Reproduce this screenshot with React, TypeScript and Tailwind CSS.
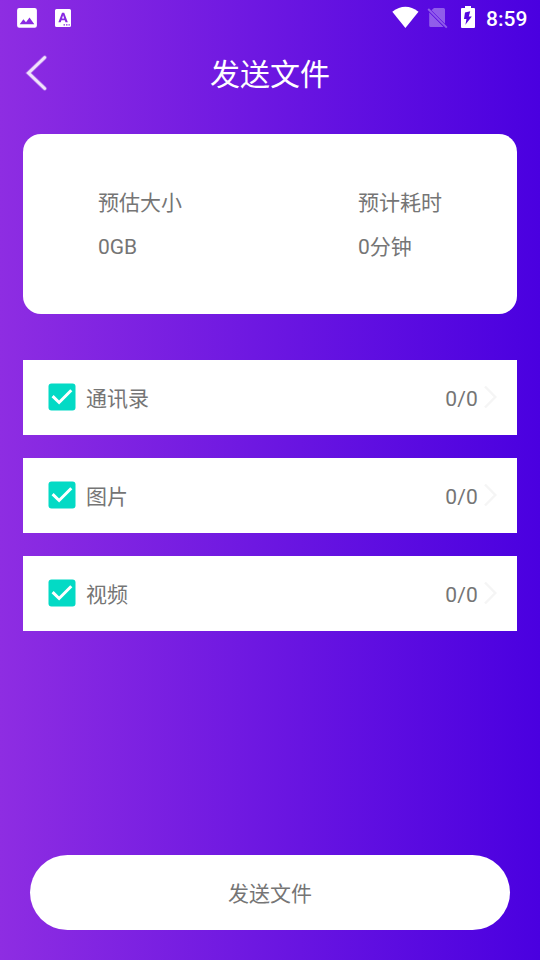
const items = ['通讯录', '图片', '视频'];

function Checkbox() {
  return (
    <svg className="mb-[2px] h-7 w-7 shrink-0" viewBox="0 0 28 28" role="img" aria-label="checked">
      <rect x="0.5" y="0.5" width="27" height="27" rx="3" fill="#03dac5" />
      <path d="M4.6 13.200 L11.1 19.500 L23.3 7.200" fill="none" stroke="#fff" strokeWidth="3" />
    </svg>
  );
}

function StatusBar() {
  return (
    <div className="flex h-9 items-center text-white">
      <svg className="h-9 w-[90px]" viewBox="0 0 90 36" fill="currentColor">
        <path
          fillRule="evenodd"
          d="M19.3 8h15.4a2.2 2.2 0 0 1 2.2 2.2v15.4a2.2 2.2 0 0 1-2.2 2.2H19.3a2.2 2.2 0 0 1-2.2-2.2V10.200a2.2 2.2 0 0 1 2.2-2.2zM19.700 24.200h14.600L29.500 17.600L26 22.200L23.400 19.200z"
        />
        <path
          fillRule="evenodd"
          d="M56.500 9h13a1.500 1.500 0 0 1 1.500 1.500v15a1.500 1.500 0 0 1-1.500 1.500h-13a1.500 1.500 0 0 1-1.500-1.500v-15a1.500 1.500 0 0 1 1.500-1.500zM62 12.800h2.200l3.600 9.500h-2.300l-.7-2h-3.400l-.7 2h-2.300zM63.100 15.300l-1.100 3.300h2.200zM63.500 24.200v1.400h1.500v-1.400zM66 24.200v1.400h1.500v-1.400zM68.500 24.200v1.400h1.300v-1.400z"
        />
      </svg>
      <svg className="ml-auto h-9 w-[90px]" viewBox="390 0 90 36" fill="currentColor">
        <path d="M392.300 11.700Q405.400 2 418.500 11.700L405.400 28z" />
        <g opacity="0.34">
          <path d="M434 8h9.500a1.500 1.500 0 0 1 1.500 1.500v14.300L431.500 10.300zM429.200 12.600L443.600 27h-12.900a1.500 1.500 0 0 1-1.500-1.500z" />
          <path d="M428.200 9L446.800 27.600" stroke="currentColor" strokeWidth="1.900" />
        </g>
        <path
          fillRule="evenodd"
          d="M465 6h6v2h3a1 1 0 0 1 1 1v18a1 1 0 0 1-1 1h-12a1 1 0 0 1-1-1V9a1 1 0 0 1 1-1h3zM470.200 11.300L465 12.500L464 18.900h2.500L465.400 24.800L471.800 16.600h-3z"
        />
      </svg>
      <span className="ml-[6px] w-[54px] translate-y-px text-[21px] leading-none font-medium">8:59</span>
    </div>
  );
}

export default function App() {
  return (
    <div className="flex h-[960px] w-[540px] flex-col overflow-hidden bg-linear-to-r/srgb from-[#8e2de2] to-[#4a00e0] font-[Roboto,'Noto_Sans_CJK_SC',sans-serif] text-[21px] text-[#757575]">
      <StatusBar />
      <header className="grid h-[75px] grid-cols-[60px_1fr_60px] items-center text-white">
        <svg className="h-[75px] w-[60px]" viewBox="0 36 60 75" fill="none" stroke="#fff" strokeLinecap="round">
          <path d="M44.700 57.500L28.500 73L44.700 88.500" strokeWidth="4.400" opacity="0.35" />
          <path d="M44.700 57.500L28.500 73L44.700 88.500" strokeWidth="2.800" opacity="0.8" />
        </svg>
        <h1 className="pt-[2px] text-center text-[30px] leading-[36px]">发送文件</h1>
      </header>

      <section className="mx-[23px] mt-[23px] grid h-[180px] shrink-0 grid-cols-[260px_1fr] content-center gap-y-[19px] rounded-[18px] bg-white pt-[2px] pl-[75px] leading-[25px]">
        <span>预估大小</span>
        <span>预计耗时</span>
        <span>0GB</span>
        <span>0分钟</span>
      </section>

      <ul className="mx-[23px] mt-[46px] flex flex-col gap-[23px]">
        {items.map((name) => (
          <li key={name} className="flex h-[75px] items-center bg-white pr-5 pl-[25px]">
            <Checkbox />
            <span className="ml-[10px] pt-1 leading-[25px]">{name}</span>
            <span className="ml-auto pt-1 leading-[25px] tracking-[0.2px]">0/0</span>
            <svg className="mb-[2px] ml-[6px] h-6 w-[13px]" viewBox="0 0 13 24" fill="none" stroke="#f5f5f5" strokeWidth="2.400">
              <path d="M1 1.500L11.300 12L1 22.500" />
            </svg>
          </li>
        ))}
      </ul>

      <button className="mx-[30px] mt-auto mb-[30px] h-[75px] shrink-0 rounded-full bg-white pt-1 leading-[25px]">
        发送文件
      </button>
    </div>
  );
}
